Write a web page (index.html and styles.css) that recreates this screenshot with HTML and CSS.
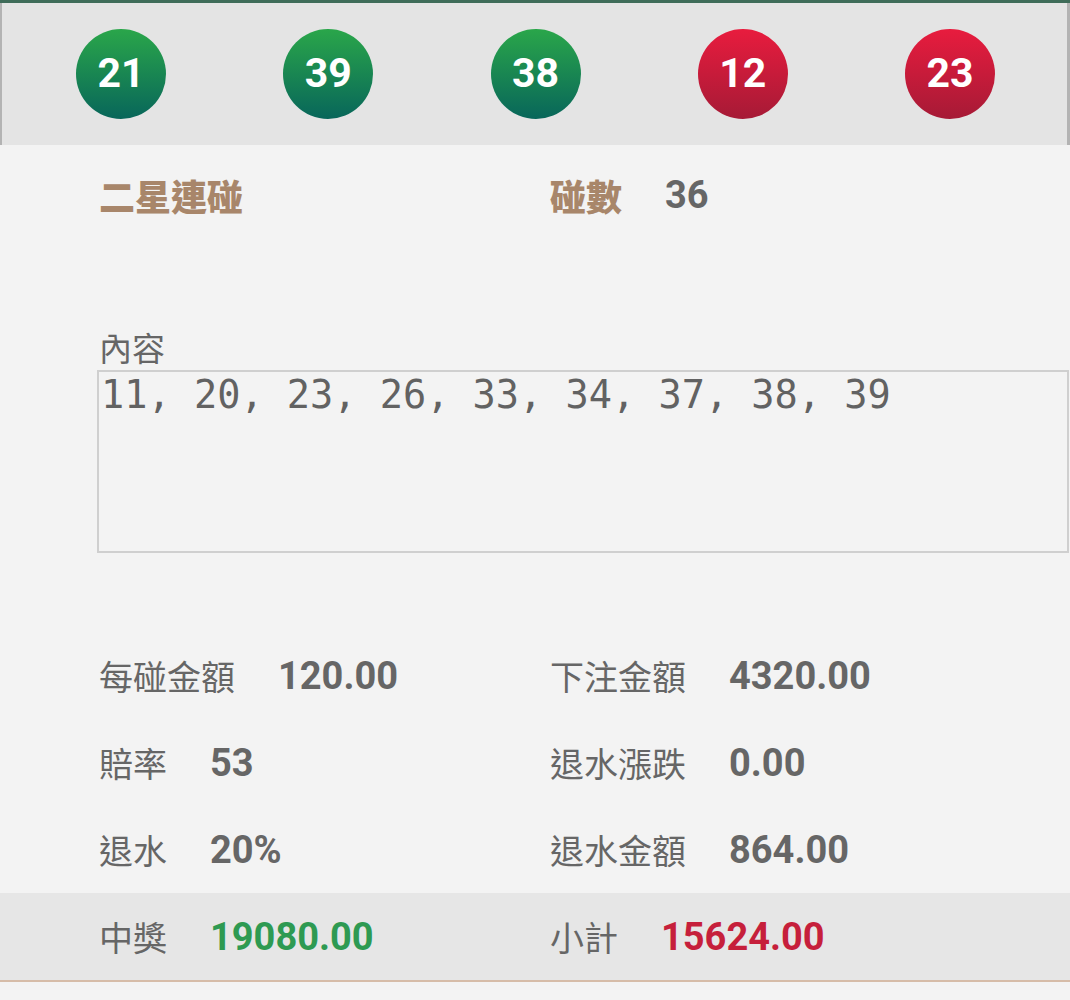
FILE: index.html
```html
<!DOCTYPE html>
<html lang="zh-Hant">
<head>
  <meta charset="UTF-8">
  <title>二星連碰</title>
  <link rel="stylesheet" href="styles.css">
</head>
<body>
  <div class="topline"></div>
  <div class="balls">
    <span class="ball green">21</span>
    <span class="ball green">39</span>
    <span class="ball green">38</span>
    <span class="ball red">12</span>
    <span class="ball red">23</span>
  </div>

  <div class="detail">
    <div class="head">
      <div class="cell"><span class="title">二星連碰</span></div>
      <div class="cell"><span class="title">碰數</span><span class="value">36</span></div>
    </div>

    <div class="content-label">內容</div>
    <div class="content-box">11, 20, 23, 26, 33, 34, 37, 38, 39</div>

    <div class="rows">
      <div class="row">
        <div class="cell"><span class="label">每碰金額</span><span class="value">120.00</span></div>
        <div class="cell"><span class="label">下注金額</span><span class="value">4320.00</span></div>
      </div>
      <div class="row">
        <div class="cell"><span class="label">賠率</span><span class="value">53</span></div>
        <div class="cell"><span class="label">退水漲跌</span><span class="value">0.00</span></div>
      </div>
      <div class="row">
        <div class="cell"><span class="label">退水</span><span class="value">20%</span></div>
        <div class="cell"><span class="label">退水金額</span><span class="value">864.00</span></div>
      </div>
      <div class="row total">
        <div class="cell"><span class="label">中獎</span><span class="value win">19080.00</span></div>
        <div class="cell"><span class="label">小計</span><span class="value sum">15624.00</span></div>
      </div>
    </div>
  </div>
</body>
</html>
```

FILE: styles.css
```css
body {
  margin: 0;
  background-color: #f3f3f3;
  font-family: Roboto, "Noto Sans CJK TC", sans-serif;
  color: #666;
}

.topline {
  height: 3px;
  background-color: #3f6c59;
}

.balls {
  height: 142px;
  display: flex;
  align-items: center;
  justify-content: space-between;
  padding: 0 72px 0 74px;
  background-color: #e4e4e4;
  border-left: 2px solid #b3b3b3;
  border-right: 3px solid #b3b3b3;
}

.ball {
  width: 90px;
  height: 90px;
  border-radius: 50%;
  display: flex;
  align-items: center;
  justify-content: center;
  color: #fff;
  font-family: Roboto, sans-serif;
  font-weight: bold;
  font-size: 41px;
  padding-bottom: 2px;
  box-sizing: border-box;
}

.ball.green {
  background: linear-gradient(to bottom, #2aa64a, #08665a);
}

.ball.red {
  background: linear-gradient(to bottom, #e81c3e, #a61a36);
}

.detail {
  padding-top: 28px;
}

.head, .row {
  display: flex;
  padding-left: 99px;
}

.head {
  height: 44px;
  align-items: center;
}

.cell {
  display: flex;
  align-items: center;
}

.cell:first-child {
  width: 451px;
}

.title {
  font-family: "Noto Sans CJK TC", sans-serif;
  font-weight: 900;
  font-size: 36px;
  color: #a8866a;
}

.label {
  font-family: "Noto Sans CJK TC", sans-serif;
  font-size: 34px;
  color: #666;
}

.value {
  margin-left: 43px;
  font-family: Roboto, sans-serif;
  font-weight: bold;
  font-size: 38px;
  color: #666;
}

.value.win {
  color: #2e9a52;
}

.value.sum {
  color: #c61f3b;
}

.content-label {
  margin: 110px 0 3px 99px;
  height: 40px;
  line-height: 40px;
  font-family: "Noto Sans CJK TC", sans-serif;
  font-size: 33px;
}

.content-box {
  margin-left: 97px;
  margin-right: 1px;
  height: 179px;
  border: 2px solid #cfcfcf;
  padding: 0 2px;
  font-family: "DejaVu Sans Mono", monospace;
  font-size: 38.6px;
  line-height: 46px;
  color: #626262;
}

.rows {
  margin-top: 79px;
}

.row {
  height: 87px;
  align-items: center;
}

.row.total {
  background-color: #e6e6e6;
  border-bottom: 2px solid #d6bca8;
}
```
